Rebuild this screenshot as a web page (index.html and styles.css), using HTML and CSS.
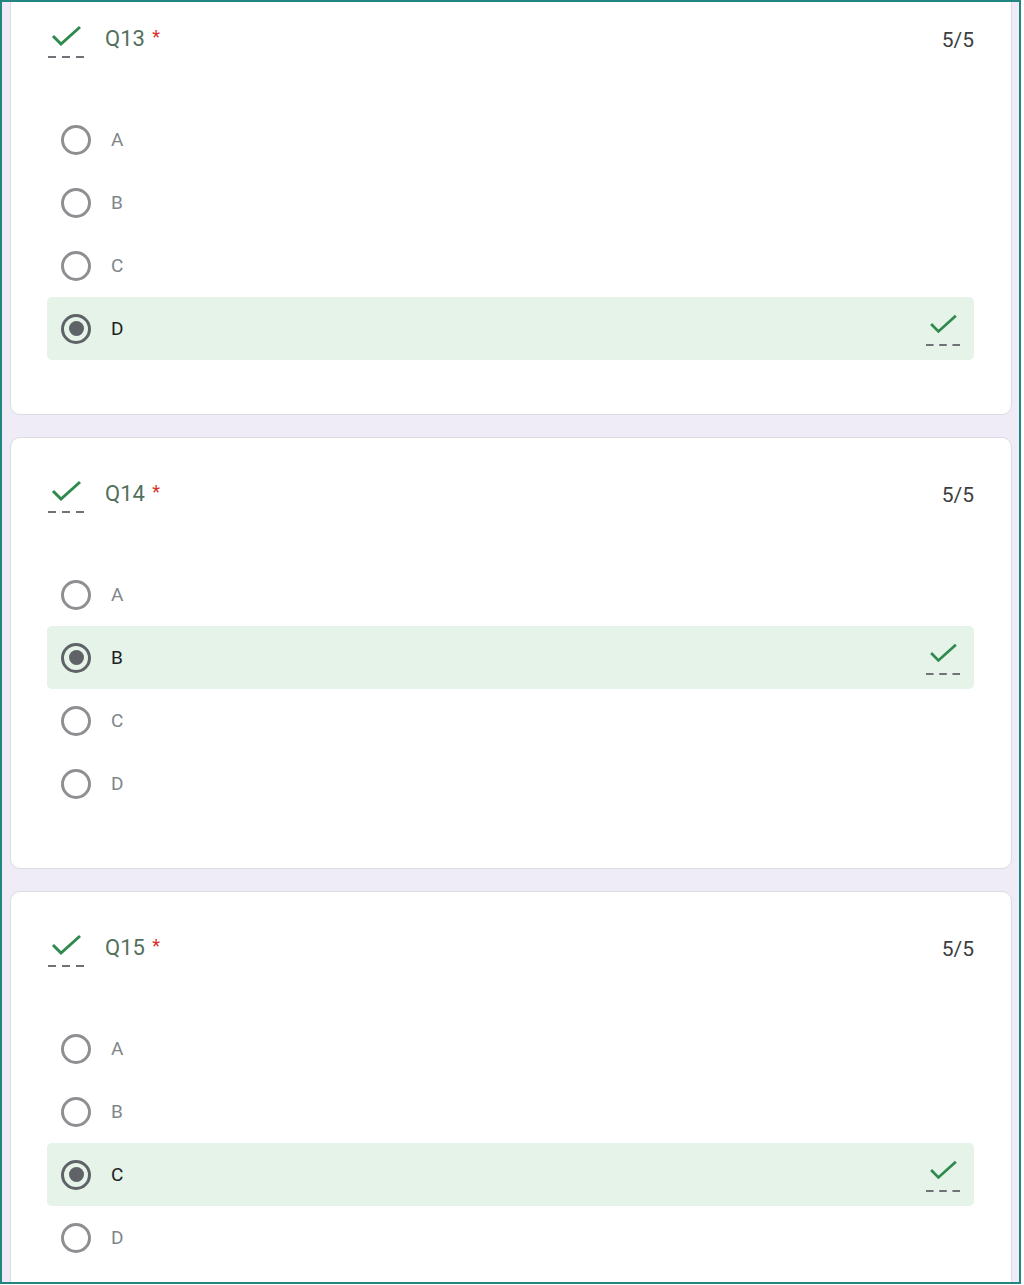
FILE: index.html
```html
<!DOCTYPE html>
<html lang="en">
<head>
    <meta charset="UTF-8">
    <meta name="viewport" content="width=device-width, initial-scale=1.0">
    <title>Quiz results</title>
    <link rel="stylesheet" href="styles.css">
</head>
<body>
    <div class="frame">
        <!-- Q13 -->
        <div class="card first">
            <div class="q-head">
                <div class="mark">
                    <svg class="tick" width="32" height="24" viewBox="0 0 32 24"><polyline points="3,11 11,19 30,2"/></svg>
                    <svg class="dashes" width="36" height="2" viewBox="0 0 36 2"><line x1="0" y1="1" x2="36" y2="1"/></svg>
                </div>
                <div class="q-title">Q13 <span class="req">*</span></div>
                <div class="score">5/5</div>
            </div>
            <div class="options">
                <div class="option"><span class="radio"></span><span class="label">A</span></div>
                <div class="option"><span class="radio"></span><span class="label">B</span></div>
                <div class="option"><span class="radio"></span><span class="label">C</span></div>
                <div class="option selected"><span class="radio"></span><span class="label">D</span>
                    <div class="mark right">
                        <svg class="tick" width="32" height="24" viewBox="0 0 32 24"><polyline points="3,11 11,19 30,2"/></svg>
                        <svg class="dashes" width="36" height="2" viewBox="0 0 36 2"><line x1="0" y1="1" x2="36" y2="1"/></svg>
                    </div>
                </div>
            </div>
        </div>

        <!-- Q14 -->
        <div class="card">
            <div class="q-head">
                <div class="mark">
                    <svg class="tick" width="32" height="24" viewBox="0 0 32 24"><polyline points="3,11 11,19 30,2"/></svg>
                    <svg class="dashes" width="36" height="2" viewBox="0 0 36 2"><line x1="0" y1="1" x2="36" y2="1"/></svg>
                </div>
                <div class="q-title">Q14 <span class="req">*</span></div>
                <div class="score">5/5</div>
            </div>
            <div class="options">
                <div class="option"><span class="radio"></span><span class="label">A</span></div>
                <div class="option selected"><span class="radio"></span><span class="label">B</span>
                    <div class="mark right">
                        <svg class="tick" width="32" height="24" viewBox="0 0 32 24"><polyline points="3,11 11,19 30,2"/></svg>
                        <svg class="dashes" width="36" height="2" viewBox="0 0 36 2"><line x1="0" y1="1" x2="36" y2="1"/></svg>
                    </div>
                </div>
                <div class="option"><span class="radio"></span><span class="label">C</span></div>
                <div class="option"><span class="radio"></span><span class="label">D</span></div>
            </div>
        </div>

        <!-- Q15 -->
        <div class="card">
            <div class="q-head">
                <div class="mark">
                    <svg class="tick" width="32" height="24" viewBox="0 0 32 24"><polyline points="3,11 11,19 30,2"/></svg>
                    <svg class="dashes" width="36" height="2" viewBox="0 0 36 2"><line x1="0" y1="1" x2="36" y2="1"/></svg>
                </div>
                <div class="q-title">Q15 <span class="req">*</span></div>
                <div class="score">5/5</div>
            </div>
            <div class="options">
                <div class="option"><span class="radio"></span><span class="label">A</span></div>
                <div class="option"><span class="radio"></span><span class="label">B</span></div>
                <div class="option selected"><span class="radio"></span><span class="label">C</span>
                    <div class="mark right">
                        <svg class="tick" width="32" height="24" viewBox="0 0 32 24"><polyline points="3,11 11,19 30,2"/></svg>
                        <svg class="dashes" width="36" height="2" viewBox="0 0 36 2"><line x1="0" y1="1" x2="36" y2="1"/></svg>
                    </div>
                </div>
                <div class="option"><span class="radio"></span><span class="label">D</span></div>
            </div>
        </div>
    </div>
</body>
</html>
```

FILE: styles.css
```css
/* Page frame */
body {
    margin: 0;
    font-family: Roboto, "Liberation Sans", Arial, sans-serif;
    background: #ffffff;
}

.frame {
    width: 1021px;
    height: 1284px;
    box-sizing: border-box;
    border: 2px solid #23857f;
    background-color: #efebf7;
    padding: 0 7px 0 8px;
    overflow: hidden;
    display: flex;
    flex-direction: column;
    gap: 22px;
}

/* Question card */
.card {
    flex-shrink: 0;
    background-color: #fff;
    border: 1px solid #dadce0;
    border-radius: 10px;
    padding: 42px 37px 53px 36px;
}

.card.first {
    margin-top: -20px;
    padding-bottom: 54px;
}

.q-head {
    display: flex;
    align-items: flex-start;
    padding-left: 1px;
}

.mark {
    width: 36px;
    display: flex;
    flex-direction: column;
}

.mark .tick {
    margin-left: 2px;
}

.mark .tick polyline {
    fill: none;
    stroke: #2f8a4e;
    stroke-width: 3;
}

.mark .dashes {
    margin-top: 7px;
}

.mark .dashes line {
    stroke: #6f7378;
    stroke-width: 2;
    stroke-dasharray: 8 6;
}

.q-title {
    margin-left: 21px;
    font-size: 22px;
    line-height: 24px;
    color: #52705d;
}

.req {
    margin-left: 2px;
    color: #d93025;
    font-size: 18px;
    vertical-align: 3px;
}

.score {
    margin-left: auto;
    margin-top: 3px;
    font-size: 21px;
    line-height: 24px;
    color: #3c4043;
}

/* Options */
.options {
    margin-top: 50px;
}

.option {
    height: 63px;
    display: flex;
    align-items: center;
    padding: 0 14px 0 14px;
    border-radius: 5px;
}

.option.selected {
    background-color: #e5f3e8;
}

.radio {
    width: 30px;
    height: 30px;
    box-sizing: border-box;
    border: 3px solid #8d8f92;
    border-radius: 50%;
    display: flex;
    align-items: center;
    justify-content: center;
}

.option.selected .radio {
    border-color: #5f6368;
}

.option.selected .radio::after {
    content: "";
    width: 15px;
    height: 15px;
    border-radius: 50%;
    background-color: #5f6368;
}

.label {
    margin-left: 20px;
    font-size: 19px;
    color: #80868b;
}

.option.selected .label {
    color: #202124;
}

.mark.right {
    margin-left: auto;
    width: 34px;
    margin-top: 2px;
}

.mark.right .tick {
    width: 30px;
    height: 22px;
    margin-left: 2px;
}

.mark.right .dashes {
    width: 34px;
    margin-top: 8px;
}
```
